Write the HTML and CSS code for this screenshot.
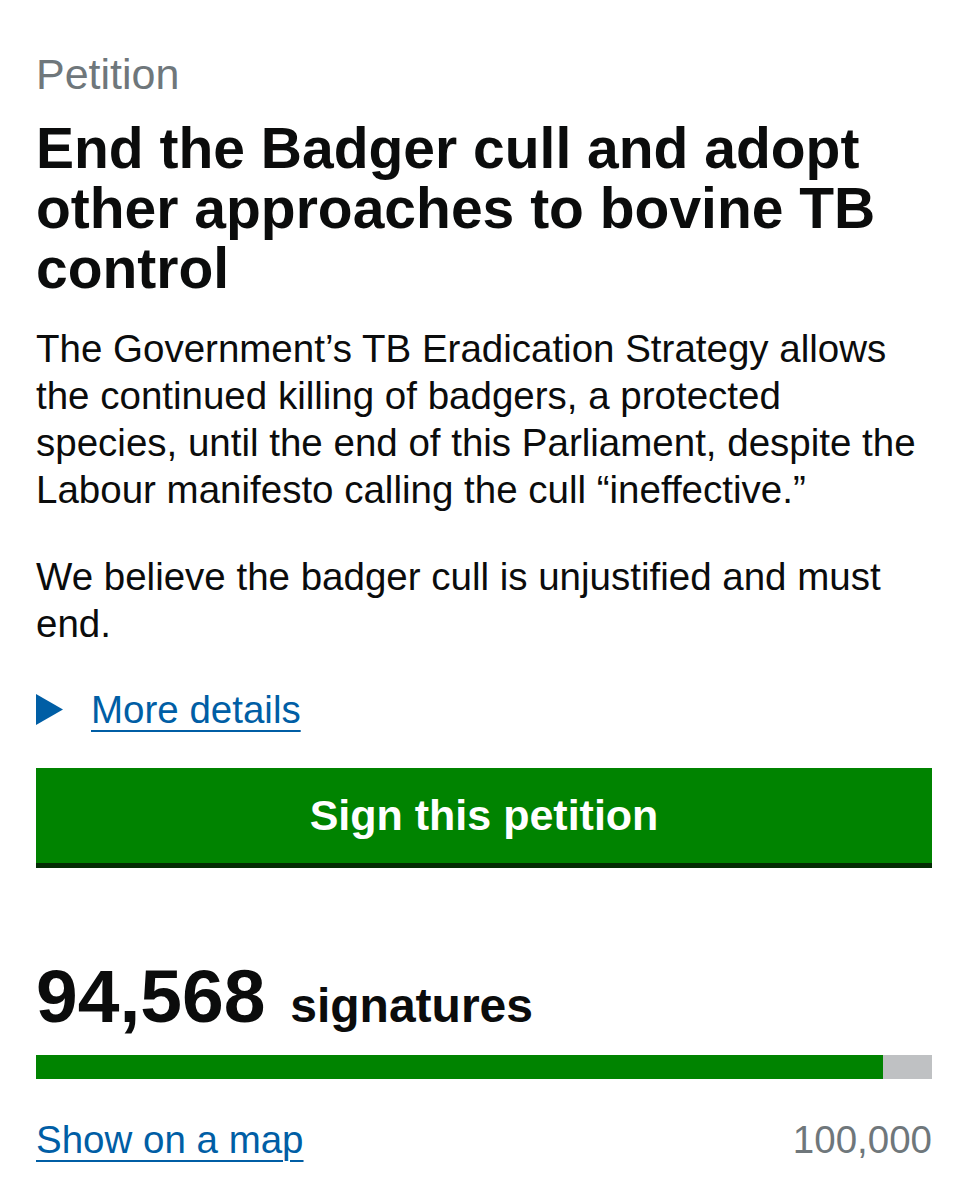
FILE: index.html
```html
<!DOCTYPE html>
<html lang="en">
<head>
    <meta charset="UTF-8">
    <meta name="viewport" content="width=device-width, initial-scale=1.0">
    <title>Petition: End the Badger cull and adopt other approaches to bovine TB control</title>
    <link rel="stylesheet" href="styles.css">
</head>
<body>
    <main class="petition">
        <span class="caption">Petition</span>
        <h1 class="title">End the Badger cull and adopt other approaches to bovine TB control</h1>

        <div class="summary">
            <p>The Government’s TB Eradication Strategy allows the continued killing of badgers, a protected species, until the end of this Parliament, despite the Labour manifesto calling the cull “ineffective.”</p>
            <p>We believe the badger cull is unjustified and must end.</p>
        </div>

        <div class="more-details">
            <svg class="arrow" width="27" height="31" viewBox="0 0 27 31" aria-hidden="true">
                <polygon points="0,0 27,15.5 0,31" fill="#005ea5"/>
            </svg>
            <a href="#details" class="link">More details</a>
        </div>

        <a href="#sign" class="sign-button">Sign this petition</a>

        <div class="signatures">
            <span class="count">94,568</span> <span class="label">signatures</span>
        </div>

        <div class="progress">
            <div class="progress-fill" style="width: 94.568%"></div>
        </div>

        <div class="progress-footer">
            <a href="#map" class="link">Show on a map</a>
            <span class="target">100,000</span>
        </div>
    </main>
</body>
</html>
```

FILE: styles.css
```css
body, html {
    margin: 0;
    padding: 0;
    font-family: "Liberation Sans", Arial, sans-serif;
    background-color: #ffffff;
    color: #0b0c0c;
}

.petition {
    padding: 49px 36px 40px;
}

.caption {
    display: block;
    font-size: 43px;
    line-height: 50px;
    color: #6f777b;
}

.title {
    margin: 19px 0 0;
    font-size: 57px;
    line-height: 60px;
    font-weight: bold;
}

.summary {
    margin-top: 27px;
}

.summary p {
    margin: 0 0 40px;
    font-size: 38.5px;
    line-height: 47px;
}

.summary p:last-child {
    margin-bottom: 0;
}

.more-details {
    display: flex;
    align-items: center;
    gap: 28px;
    margin-top: 39px;
    font-size: 38.5px;
    line-height: 47px;
}

.arrow {
    display: block;
    flex-shrink: 0;
}

.link {
    color: #005ea5;
    text-decoration: underline;
    text-decoration-thickness: 2px;
    text-underline-offset: 7px;
}

.sign-button {
    display: block;
    margin-top: 35px;
    height: 95px;
    line-height: 95px;
    background-color: #008300;
    box-shadow: 0 5px 0 #032b03;
    color: #ffffff;
    font-size: 43px;
    font-weight: bold;
    text-align: center;
    text-decoration: none;
}

.signatures {
    margin-top: 93px;
    font-size: 75px;
    font-weight: bold;
    line-height: 80px;
}

.label {
    margin-left: 4px;
    font-size: 48px;
    line-height: 1;
}

.progress {
    margin-top: 19px;
    height: 24px;
    background-color: #bfc1c3;
}

.progress-fill {
    height: 100%;
    background-color: #008300;
}

.progress-footer {
    display: flex;
    justify-content: space-between;
    align-items: baseline;
    margin-top: 37px;
    font-size: 38.5px;
    line-height: 47px;
}

.target {
    color: #6f777b;
}
```
